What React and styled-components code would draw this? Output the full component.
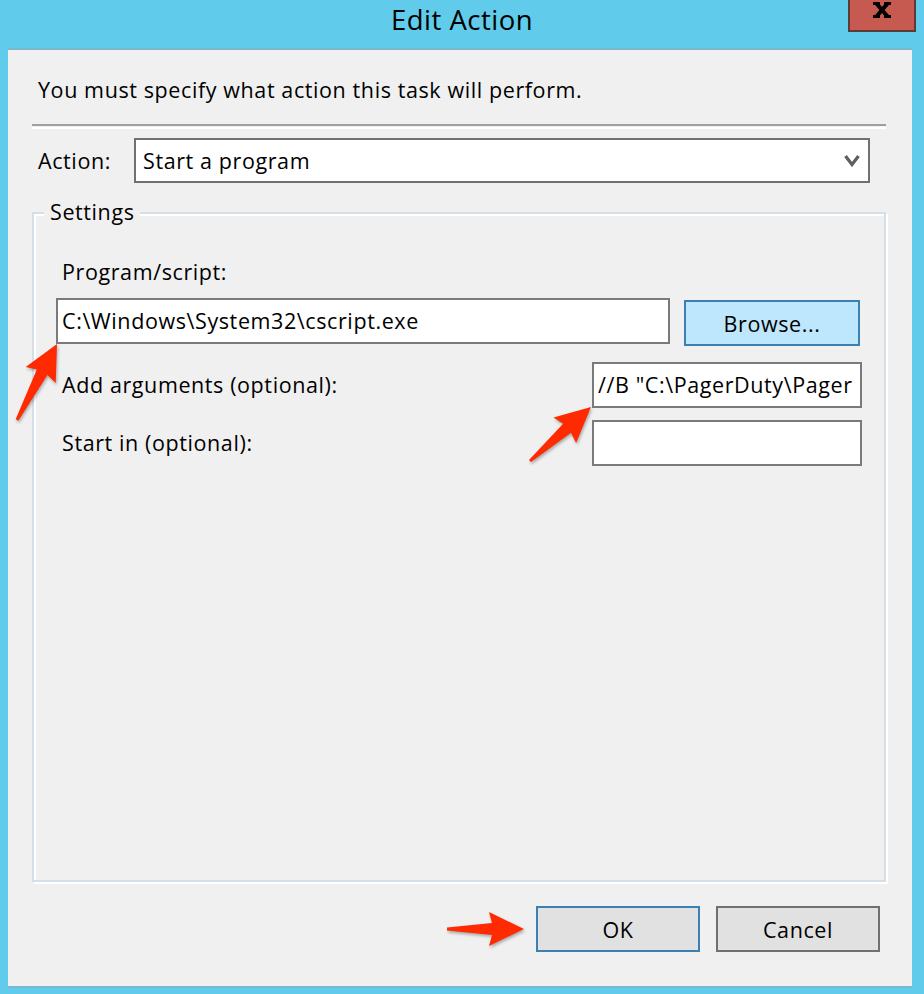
import React from 'react';
import styled, { createGlobalStyle } from 'styled-components';

const GlobalStyle = createGlobalStyle`
  html, body {
    margin: 0;
    padding: 0;
  }
  body {
    background: #60cbeb;
    font-family: "Open Sans", "Noto Sans", "DejaVu Sans", sans-serif;
    color: #000;
  }
`;

// arrow shape along the tail -> tip axis
const arrowPoints = (tail, tip) => {
    const dx = tip[0] - tail[0];
    const dy = tip[1] - tail[1];
    const L = Math.hypot(dx, dy);
    const ux = dx / L, uy = dy / L;
    const nx = -uy, ny = ux;
    const local = [[0, -1.5], [L - 32, -6], [L - 35, -17], [L, 0], [L - 35, 17], [L - 32, 6], [0, 1.5]];
    return local.map(([a, b]) => [tail[0] + ux * a + nx * b, tail[1] + uy * a + ny * b]);
};

const Arrow = ({ tail, tip }) => {
    const pts = arrowPoints(tail, tip);
    const xs = pts.map(p => p[0]);
    const ys = pts.map(p => p[1]);
    const left = Math.floor(Math.min(...xs)) - 4;
    const top = Math.floor(Math.min(...ys)) - 4;
    const w = Math.ceil(Math.max(...xs)) - left + 8;
    const h = Math.ceil(Math.max(...ys)) - top + 8;
    const d = pts.map(p => `${(p[0] - left).toFixed(1)},${(p[1] - top).toFixed(1)}`).join(' ');
    return (
        <ArrowSvg width={w} height={h} style={{ left, top }}>
            <polygon points={d} fill="#ff2a00" />
        </ArrowSvg>
    );
};

const App = () => {
    return (
        <>
            <GlobalStyle />
            <Window>
                <TitleBar>
                    <Title>Edit Action</Title>
                    <CloseButton>
                        <svg width="18" height="16" viewBox="0 0 18 16">
                            <path d="M3 1 L15 15 M15 1 L3 15" stroke="#000" strokeWidth="4" />
                            <rect x="0" y="0" width="7" height="3" fill="#000" />
                            <rect x="11" y="0" width="7" height="3" fill="#000" />
                            <rect x="0" y="13" width="7" height="3" fill="#000" />
                            <rect x="11" y="13" width="7" height="3" fill="#000" />
                        </svg>
                    </CloseButton>
                </TitleBar>
                <Client>
                    <Intro>You must specify what action this task will perform.</Intro>
                    <Separator />
                    <ActionRow>
                        <ActionLabel>Action:</ActionLabel>
                        <Select>
                            <span>Start a program</span>
                            <svg width="16" height="14" viewBox="0 0 16 14">
                                <polyline points="1.5,2 8,10.5 14.5,2" fill="none" stroke="#606060" strokeWidth="3.2" />
                            </svg>
                        </Select>
                    </ActionRow>
                    <Group>
                        <Legend>Settings</Legend>
                        <FieldLabel>Program/script:</FieldLabel>
                        <ProgramRow>
                            <TextBox grow>C:\Windows\System32\cscript.exe</TextBox>
                            <BrowseButton>Browse...</BrowseButton>
                        </ProgramRow>
                        <FieldRow gap={16}>
                            <FieldLabel>Add arguments (optional):</FieldLabel>
                            <TextBox width={270}>//B "C:\PagerDuty\Pager</TextBox>
                        </FieldRow>
                        <FieldRow gap={12}>
                            <FieldLabel>Start in (optional):</FieldLabel>
                            <TextBox width={270}></TextBox>
                        </FieldRow>
                    </Group>
                    <ButtonRow>
                        <Button primary>OK</Button>
                        <Button>Cancel</Button>
                    </ButtonRow>
                </Client>
                <Arrow tail={[17, 420]} tip={[57, 344]} />
                <Arrow tail={[530, 461]} tip={[591, 407]} />
                <Arrow tail={[447, 929]} tip={[524, 929]} />
            </Window>
        </>
    );
};

export default App;

const ArrowSvg = styled.svg`
    position: absolute;
    filter: drop-shadow(1px 2px 1.5px rgba(0, 0, 0, 0.3));
    pointer-events: none;
`;

const Window = styled.div`
    position: relative;
    width: 924px;
    height: 994px;
    background: #60cbeb;
    display: flex;
    flex-direction: column;
    box-sizing: border-box;
    font-size: 21.5px;
    letter-spacing: 0.6px;
`;

const TitleBar = styled.div`
    height: 48px;
    display: grid;
    grid-template-columns: 1fr auto 1fr;
    align-items: start;
`;

const Title = styled.div`
    grid-column: 2;
    font-size: 27.5px;
    letter-spacing: 0.5px;
    line-height: 40px;
    color: #000;
`;

const CloseButton = styled.div`
    grid-column: 3;
    justify-self: end;
    margin-right: 8px;
    width: 68px;
    height: 32px;
    box-sizing: border-box;
    background: #c75a50;
    border: 2px solid #5d3a36;
    border-top: none;
    display: flex;
    justify-content: center;
    align-items: flex-start;
    padding-top: 2px;
`;

const Client = styled.div`
    flex: 1;
    margin: 0 12px 6px 8px;
    background: #f0f0f0;
    border-top: 2px solid #7cb6cf;
    border-bottom: 2px solid #7cb6cf;
    padding: 0 26px 0 24px;
    display: flex;
    flex-direction: column;
`;

const Intro = styled.div`
    margin-top: 26px;
    padding-left: 6px;
    line-height: 28px;
`;

const Separator = styled.div`
    margin-top: 20px;
    height: 1px;
    border-top: 2px solid #a0a0a0;
    border-bottom: 2px solid #fff;
`;

const ActionRow = styled.div`
    margin-top: 9px;
    display: flex;
    align-items: center;
    padding-left: 6px;
    padding-right: 16px;
`;

const ActionLabel = styled.div`
    width: 96px;
    line-height: 28px;
`;

const Select = styled.div`
    flex: 1;
    height: 45px;
    box-sizing: border-box;
    border: 2px solid #707070;
    background: #fff;
    display: flex;
    align-items: center;
    justify-content: space-between;
    padding: 0 8px 0 7px;
`;

const Group = styled.div`
    position: relative;
    margin-top: 29px;
    height: 670px;
    box-sizing: border-box;
    border: 2px solid #d5dfe5;
    box-shadow: inset 2px 2px 0 #fff, 2px 2px 0 #fff;
    padding: 44px 22px 0 22px;
    display: flex;
    flex-direction: column;
`;

const Legend = styled.div`
    position: absolute;
    top: -16px;
    left: 10px;
    padding: 0 5px 0 6px;
    background: #f0f0f0;
    line-height: 28px;
`;

const FieldLabel = styled.div`
    padding-left: 6px;
    line-height: 28px;
`;

const ProgramRow = styled.div`
    margin-top: 12px;
    display: flex;
    align-items: flex-start;
    gap: 14px;
    padding-right: 2px;
`;

const FieldRow = styled.div`
    margin-top: ${p => p.gap}px;
    display: flex;
    align-items: center;
    justify-content: space-between;
`;

const TextBox = styled.div`
    ${p => p.grow ? 'flex: 1;' : `width: ${p.width}px;`}
    height: 46px;
    box-sizing: border-box;
    border: 2px solid #7a7a7a;
    background: #fff;
    padding: 0 4px;
    line-height: 42px;
    white-space: nowrap;
    overflow: hidden;
`;

const BrowseButton = styled.div`
    margin-top: 2px;
    width: 176px;
    height: 46px;
    box-sizing: border-box;
    background: #bee6fd;
    border: 2px solid #3c7fb1;
    display: flex;
    align-items: center;
    justify-content: center;
`;

const ButtonRow = styled.div`
    margin-top: 24px;
    display: flex;
    justify-content: flex-end;
    gap: 16px;
    padding-right: 6px;
`;

const Button = styled.div`
    width: 164px;
    height: 46px;
    box-sizing: border-box;
    background: #e1e1e1;
    border: 2px solid ${p => p.primary ? '#3c7fb1' : '#707070'};
    display: flex;
    align-items: center;
    justify-content: center;
`;
